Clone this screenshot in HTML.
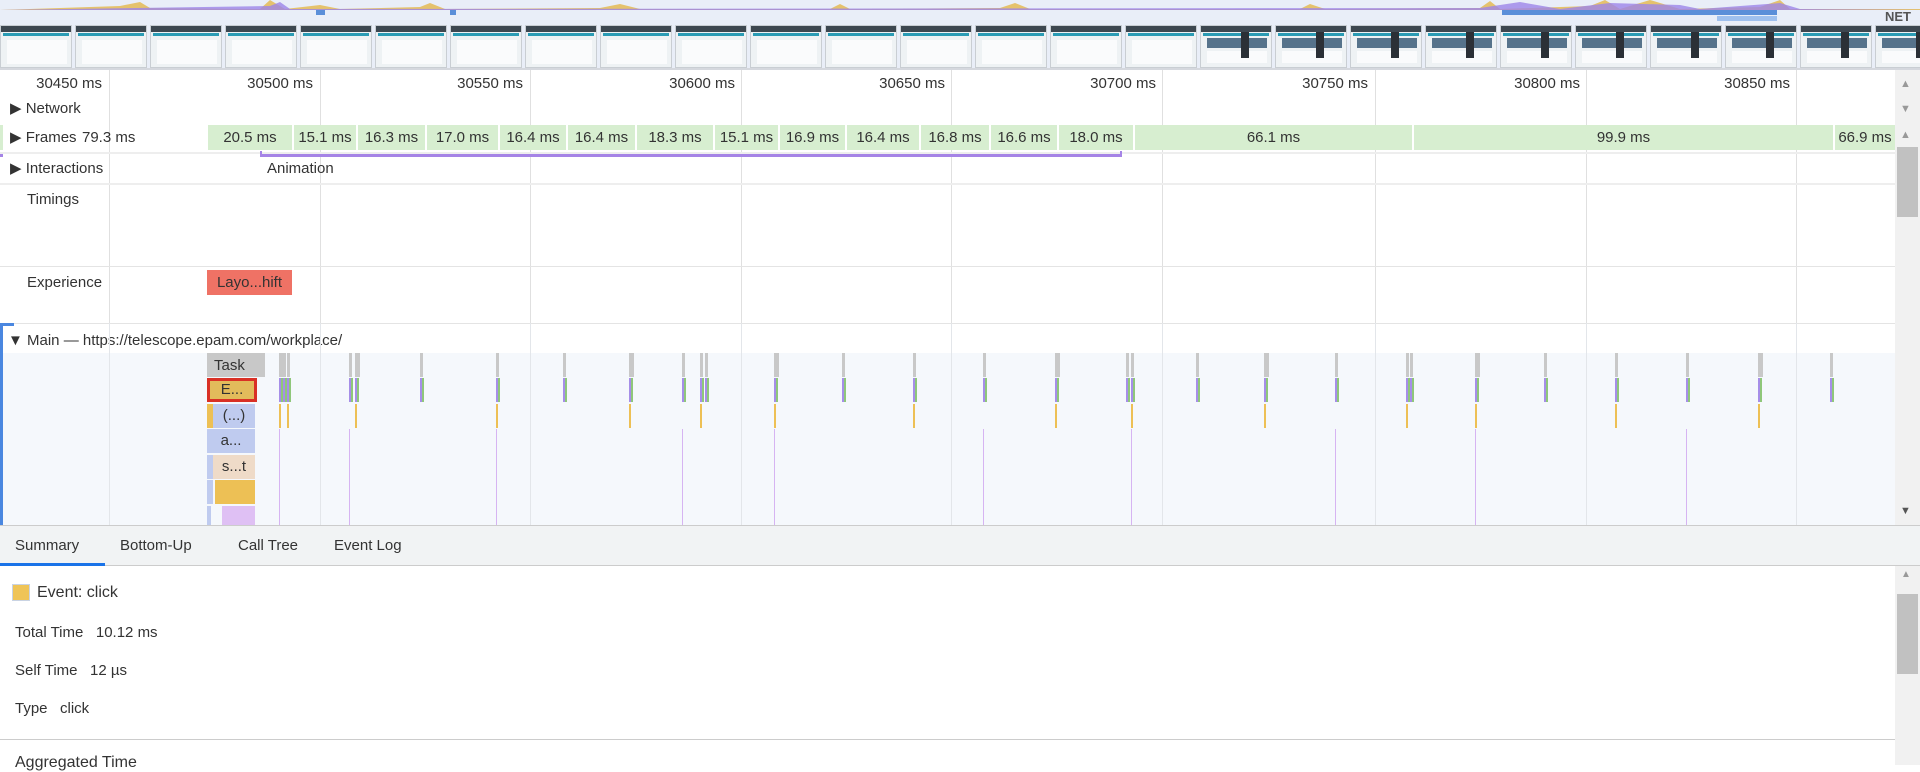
<!DOCTYPE html>
<html><head><meta charset="utf-8"><style>
*{margin:0;padding:0;box-sizing:border-box}
body{width:1920px;height:765px;overflow:hidden;background:#fff;font-family:"Liberation Sans",sans-serif;font-size:15px;color:#333;position:relative}
.a{position:absolute}
.t{position:absolute;white-space:nowrap;line-height:18px}
.g{position:absolute;width:1px;background:#e0e0e0}
.fr{position:absolute;top:125px;height:25px;background:#d7eed0;text-align:center;line-height:25px;font-size:15px}
.th{position:absolute;top:25px;width:72px;height:43px;background:#eef2f4;border:1px solid #c9ced3}
.th i{position:absolute;left:0;right:0;top:0;height:6px;background:#3d4750}
.th b{position:absolute;left:2px;right:2px;top:7px;height:3px;background:#2a9bb4}
.th u{position:absolute;left:6px;top:14px;width:60px;height:24px;background:#fff;opacity:.7}
.tk{position:absolute;width:2px}
</style></head><body>
<!-- overview -->
<div class="a" style="left:0;top:0;width:1920px;height:70px;background:#e9eef8;border-bottom:2px solid #d5d8de"></div>
<svg class="a" style="left:0;top:0" width="1920" height="10"><path d="M0 10 L60 8 L120 6 L140 2 L150 8 L260 9 L270 0 L285 9 L320 5 L340 9 L420 7 L430 3 L445 9 L600 8 L620 4 L640 9 L830 9 L840 4 L850 9 L1000 8 L1015 3 L1030 9 L1300 9 L1310 4 L1325 9 L1480 8 L1490 1 L1500 9 L1590 6 L1605 0 L1620 9 L1650 0 L1680 9 L1760 7 L1780 0 L1790 9 L1920 9 L1920 10Z" fill="#e3b64a" opacity=".8"/><path d="M0 10 L270 6 L280 2 L290 9 L1480 8 L1520 2 L1560 9 L1610 3 L1680 5 L1700 9 L1780 3 L1800 9 L1920 10Z" fill="#9c85e8" opacity=".8"/></svg>
<div class="a" style="left:316px;top:10px;width:9px;height:5px;background:#5b8fd9"></div>
<div class="a" style="left:450px;top:10px;width:6px;height:5px;background:#5b8fd9"></div>
<div class="a" style="left:1502px;top:10px;width:275px;height:5px;background:#5b8fd9"></div>
<div class="a" style="left:1717px;top:16px;width:60px;height:5px;background:#9fc0ee"></div>
<div class="t" style="left:1885px;top:8px;font-weight:bold;font-size:13px;color:#555">NET</div>
<div id="thumbs"></div>
<!-- grid lines -->
<div id="grid"></div>
<!-- ruler labels -->
<div class="t" style="right:1818px;top:75px">30450 ms</div>
<div class="t" style="right:1607px;top:75px">30500 ms</div>
<div class="t" style="right:1397px;top:75px">30550 ms</div>
<div class="t" style="right:1185px;top:75px">30600 ms</div>
<div class="t" style="right:975px;top:75px">30650 ms</div>
<div class="t" style="right:764px;top:75px">30700 ms</div>
<div class="t" style="right:552px;top:75px">30750 ms</div>
<div class="t" style="right:340px;top:75px">30800 ms</div>
<div class="t" style="right:130px;top:75px">30850 ms</div>
<!-- tracks -->
<div class="t" style="left:10px;top:100px">▶ Network</div>
<div class="fr" style="left:0;width:3px;background:#d7eed0"></div>
<div class="t" style="left:10px;top:129px">▶ Frames</div>
<div class="t" style="left:82px;top:129px">79.3 ms</div>
<div class="fr" style="left:208px;width:84px">20.5 ms</div>
<div class="fr" style="left:294px;width:62px">15.1 ms</div>
<div class="fr" style="left:358px;width:67px">16.3 ms</div>
<div class="fr" style="left:427px;width:71px">17.0 ms</div>
<div class="fr" style="left:500px;width:66px">16.4 ms</div>
<div class="fr" style="left:568px;width:67px">16.4 ms</div>
<div class="fr" style="left:637px;width:76px">18.3 ms</div>
<div class="fr" style="left:715px;width:63px">15.1 ms</div>
<div class="fr" style="left:780px;width:65px">16.9 ms</div>
<div class="fr" style="left:847px;width:72px">16.4 ms</div>
<div class="fr" style="left:921px;width:68px">16.8 ms</div>
<div class="fr" style="left:991px;width:66px">16.6 ms</div>
<div class="fr" style="left:1059px;width:74px">18.0 ms</div>
<div class="fr" style="left:1135px;width:277px">66.1 ms</div>
<div class="fr" style="left:1414px;width:419px">99.9 ms</div>
<div class="fr" style="left:1835px;width:60px">66.9 ms</div>
<div class="a" style="left:0;top:152px;width:1895px;height:2px;background:#eee"></div>
<div class="a" style="left:0;top:154px;width:3px;height:3px;background:#a584e6"></div>
<div class="a" style="left:260px;top:154px;width:862px;height:3px;background:#a584e6"></div>
<div class="a" style="left:260px;top:151px;width:2px;height:6px;background:#a584e6"></div>
<div class="a" style="left:1120px;top:151px;width:2px;height:6px;background:#a584e6"></div>
<div class="t" style="left:10px;top:160px">▶ Interactions</div>
<div class="t" style="left:267px;top:160px">Animation</div>
<div class="a" style="left:0;top:183px;width:1895px;height:2px;background:#eee"></div>
<div class="t" style="left:27px;top:191px">Timings</div>
<div class="a" style="left:0;top:266px;width:1895px;height:1px;background:#e4e4e4"></div>
<div class="t" style="left:27px;top:274px">Experience</div>
<div class="a" style="left:207px;top:270px;width:85px;height:25px;background:#ef7265;line-height:25px;text-align:center">Layo...hift</div>
<div class="a" style="left:0;top:323px;width:1895px;height:1px;background:#e4e4e4"></div>
<div class="a" style="left:0;top:323px;width:3px;height:202px;background:#4a87e0"></div>
<div class="a" style="left:0;top:323px;width:14px;height:3px;background:#4a87e0"></div>
<div class="t" style="left:8px;top:332px">▼ Main — https://telescope.epam.com/workplace/</div>
<div class="a" style="left:3px;top:353px;width:1892px;height:172px;background:#f5f8fc"></div>
<div id="grid2"></div>
<div id="ticks"></div>
<!-- flame main column -->
<div class="a" style="left:207px;top:353px;width:58px;height:24px;background:#c8c8c8;padding:4px 7px">Task</div>
<div class="a" style="left:207px;top:378px;width:50px;height:24px;background:#e2bb5b;border:3px solid #d93025;text-align:center;line-height:18px">E...</div>
<div class="a" style="left:207px;top:404px;width:6px;height:24px;background:#edc055"></div>
<div class="a" style="left:213px;top:404px;width:42px;height:24px;background:#bfcbef;text-align:center;line-height:24px">(...)</div>
<div class="a" style="left:207px;top:429px;width:48px;height:24px;background:#bfcbef;text-align:center;line-height:24px">a...</div>
<div class="a" style="left:207px;top:455px;width:6px;height:24px;background:#bfcbef"></div>
<div class="a" style="left:213px;top:455px;width:42px;height:24px;background:#efdbc8;text-align:center;line-height:24px">s...t</div>
<div class="a" style="left:207px;top:480px;width:6px;height:24px;background:#bfcbef"></div>
<div class="a" style="left:215px;top:480px;width:40px;height:24px;background:#edc055"></div>
<div class="a" style="left:207px;top:506px;width:4px;height:19px;background:#bfcbef"></div>
<div class="a" style="left:222px;top:506px;width:33px;height:19px;background:#dfc0f4"></div>
<!-- scrollbar top -->
<div class="a" style="left:1895px;top:70px;width:25px;height:455px;background:#f1f1f1"></div>
<div class="t" style="left:1900px;top:75px;font-size:11px;color:#999">▲</div>
<div class="t" style="left:1900px;top:100px;font-size:11px;color:#999">▼</div>
<div class="t" style="left:1900px;top:126px;font-size:11px;color:#999">▲</div>
<div class="a" style="left:1897px;top:147px;width:21px;height:70px;background:#c1c1c1"></div>
<div class="t" style="left:1900px;top:502px;font-size:11px;color:#555">▼</div>
<!-- tabs -->
<div class="a" style="left:0;top:525px;width:1920px;height:41px;background:#f1f3f4;border-top:1px solid #ccc;border-bottom:1px solid #ccc"></div>
<div class="t" style="left:15px;top:537px">Summary</div>
<div class="t" style="left:120px;top:537px">Bottom-Up</div>
<div class="t" style="left:238px;top:537px">Call Tree</div>
<div class="t" style="left:334px;top:537px">Event Log</div>
<div class="a" style="left:0;top:563px;width:105px;height:3px;background:#1a73e8"></div>
<!-- summary -->
<div class="a" style="left:12px;top:584px;width:18px;height:17px;background:#efc457;border:1px solid #c9d3e3"></div>
<div class="t" style="left:37px;top:584px;font-size:16px">Event: click</div>
<div class="t" style="left:15px;top:624px">Total Time&nbsp;&nbsp; 10.12 ms</div>
<div class="t" style="left:15px;top:662px">Self Time&nbsp;&nbsp; 12 µs</div>
<div class="t" style="left:15px;top:700px">Type&nbsp;&nbsp; click</div>
<div class="a" style="left:0;top:739px;width:1895px;height:1px;background:#ccc"></div>
<div class="t" style="left:15px;top:754px;font-size:16px">Aggregated Time</div>
<div class="a" style="left:1895px;top:566px;width:25px;height:199px;background:#f1f1f1"></div>
<div class="t" style="left:1901px;top:566px;font-size:10px;color:#999">▲</div>
<div class="a" style="left:1897px;top:594px;width:21px;height:80px;background:#c1c1c1"></div>
<script>
var h='';
for(var i=0;i<26;i++){var x=i*75;var dark=i>=16;h+='<div class="th" style="left:'+x+'px"><i></i><b></b><u style="'+(dark?'background:#2f5270;opacity:.8;height:10px;top:12px':'')+'"></u>'+(dark?'<u style="top:25px;height:12px"></u><i style="left:40px;width:8px;right:auto;top:6px;height:26px;background:#2b3036"></i>':'')+'</div>';}
document.getElementById('thumbs').innerHTML=h;
var gx=[109,320,530,741,951,1162,1375,1586,1796];g='';g2='';
gx.forEach(function(x){g+='<div class="g" style="left:'+x+'px;top:70px;height:253px"></div>';g2+='<div class="g" style="left:'+x+'px;top:323px;height:202px;background:#e3e6ea"></div>';});
document.getElementById('grid').innerHTML=g;document.getElementById('grid2').innerHTML=g2;
var tx=[279,283,287,349,355,420,496,563,629,682,700,705,774,842,913,983,1055,1126,1131,1196,1264,1335,1406,1410,1475,1544,1615,1686,1758,1830];
var t='';
tx.forEach(function(x,k){
t+='<div class="tk" style="left:'+x+'px;top:353px;height:24px;background:#c8c8c8;width:'+(k%4==0?5:3)+'px"></div>';
t+='<div class="tk" style="left:'+x+'px;top:378px;height:24px;background:#a68ee8"></div><div class="tk" style="left:'+(x+2)+'px;top:378px;height:24px;background:#8fc77a"></div>';
if(k%2==0)t+='<div class="tk" style="left:'+x+'px;top:404px;height:24px;background:#edc055"></div>';
if(k%3==0){t+='<div class="tk" style="left:'+x+'px;top:429px;height:96px;width:1px;background:#d6b4f2"></div>';}
});
document.getElementById('ticks').innerHTML=t;
</script>
</body></html>
